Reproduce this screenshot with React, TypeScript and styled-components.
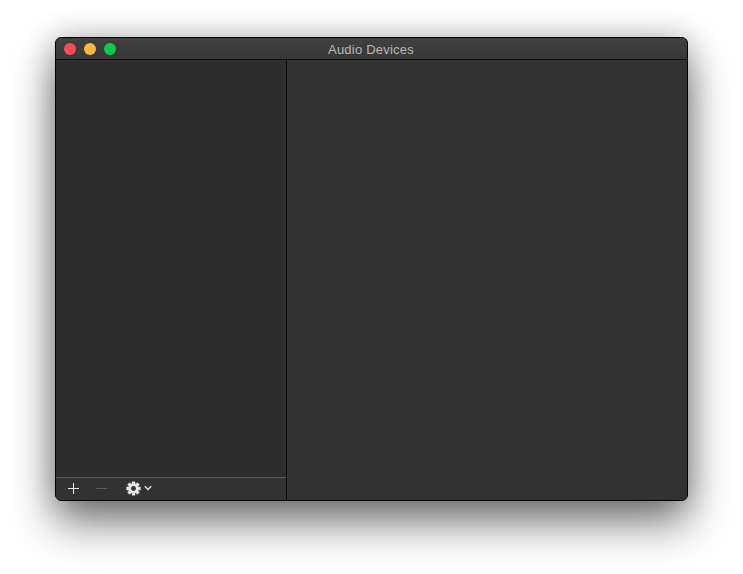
import React from 'react'
import styled, { createGlobalStyle } from 'styled-components'

const GlobalStyle = createGlobalStyle`
  html, body {
    margin: 0;
    height: 100%;
    background: #fff;
    overflow: hidden;
  }
  #root {
    height: 100%;
  }
`

const Page = styled.div`
  height: 574px;
  box-sizing: border-box;
  padding: 37px 55px 73px;
  font-family: 'Liberation Sans', Arial, sans-serif;
`

const Window = styled.div`
  width: 633px;
  height: 464px;
  box-sizing: border-box;
  display: flex;
  flex-direction: column;
  background: #323232;
  border: 1px solid #000;
  border-radius: 6px;
  overflow: hidden;
`

const Shadow = styled.div`
  width: 633px;
  height: 464px;
  border-radius: 6px;
  box-shadow: 0 22px 44px rgba(0, 0, 0, 0.52), 0 0 30px rgba(0, 0, 0, 0.22);
`

const TitleBar = styled.div`
  height: 21px;
  flex: none;
  position: relative;
  display: flex;
  align-items: center;
  justify-content: center;
  background: linear-gradient(#404040, #383838);
  border-bottom: 1px solid #0c0c0c;
`

const Lights = styled.div`
  position: absolute;
  left: 8px;
  top: 5px;
  display: flex;
  gap: 8px;
`

const Light = styled.span<{ $color: string }>`
  width: 12px;
  height: 12px;
  border-radius: 50%;
  background: ${(p) => p.$color};
`

const Title = styled.span`
  font-size: 13px;
  color: #b8b8b8;
  letter-spacing: 0.22px;
  position: relative;
  top: 0.5px;
  left: -0.5px;
`

const Body = styled.div`
  flex: 1;
  display: flex;
  min-height: 0;
`

const Sidebar = styled.div`
  width: 231px;
  flex: none;
  box-sizing: border-box;
  display: flex;
  flex-direction: column;
  background: #2d2d2d;
  border-right: 1px solid #0a0a0a;
`

const SidebarList = styled.div`
  flex: 1;
`

const Toolbar = styled.div`
  height: 23px;
  flex: none;
  box-sizing: border-box;
  padding-bottom: 2px;
  display: flex;
  align-items: center;
  background: #323232;
  border-top: 1px solid #5a5a5a;
`

const ToolButton = styled.button<{ $width: number; $dim?: boolean }>`
  width: ${(p) => p.$width}px;
  height: 100%;
  padding: 0;
  border: 0;
  background: none;
  display: flex;
  align-items: center;
  justify-content: center;
  gap: 3px;
  color: ${(p) => (p.$dim ? '#5c5c5c' : '#e8e8e8')};
`

const Main = styled.div`
  flex: 1;
  background: #323232;
`

const Gear = () => (
  <svg width="15" height="15" viewBox="0 0 15 15">
    {[0, 45, 90, 135].map((a) => (
      <rect key={a} x="5.8" y="0.4" width="3.4" height="14.2" rx="0.5" fill="currentColor" transform={`rotate(${a} 7.5 7.5)`} />
    ))}
    <circle cx="7.5" cy="7.5" r="3.8" fill="none" stroke="currentColor" strokeWidth="2.6" />
    <circle cx="7.5" cy="7.5" r="2.4" fill="#323232" />
  </svg>
)

const App = () => {
  return (
    <>
      <GlobalStyle />
      <Page>
        <Shadow>
          <Window>
            <TitleBar>
              <Lights>
                <Light $color="#fb4a54" />
                <Light $color="#fdb83f" />
                <Light $color="#0ccb4f" />
              </Lights>
              <Title>Audio Devices</Title>
            </TitleBar>
            <Body>
              <Sidebar>
                <SidebarList />
                <Toolbar>
                  <ToolButton $width={34}>
                    <svg width="11" height="11" viewBox="0 0 11 11">
                      <path d="M5.5 0v11M0 5.5h11" stroke="currentColor" fill="none" />
                    </svg>
                  </ToolButton>
                  <ToolButton $width={22} $dim>
                    <svg width="11" height="11" viewBox="0 0 11 11">
                      <path d="M0 5.5h11" stroke="currentColor" fill="none" />
                    </svg>
                  </ToolButton>
                  <ToolButton $width={53}>
                    <Gear />
                    <svg width="8" height="6" viewBox="0 0 8 6">
                      <path d="M0.8 1.2L4 4.4l3.2-3.2" stroke="currentColor" strokeWidth="1.4" fill="none" />
                    </svg>
                  </ToolButton>
                </Toolbar>
              </Sidebar>
              <Main />
            </Body>
          </Window>
        </Shadow>
      </Page>
    </>
  )
}

export default App
